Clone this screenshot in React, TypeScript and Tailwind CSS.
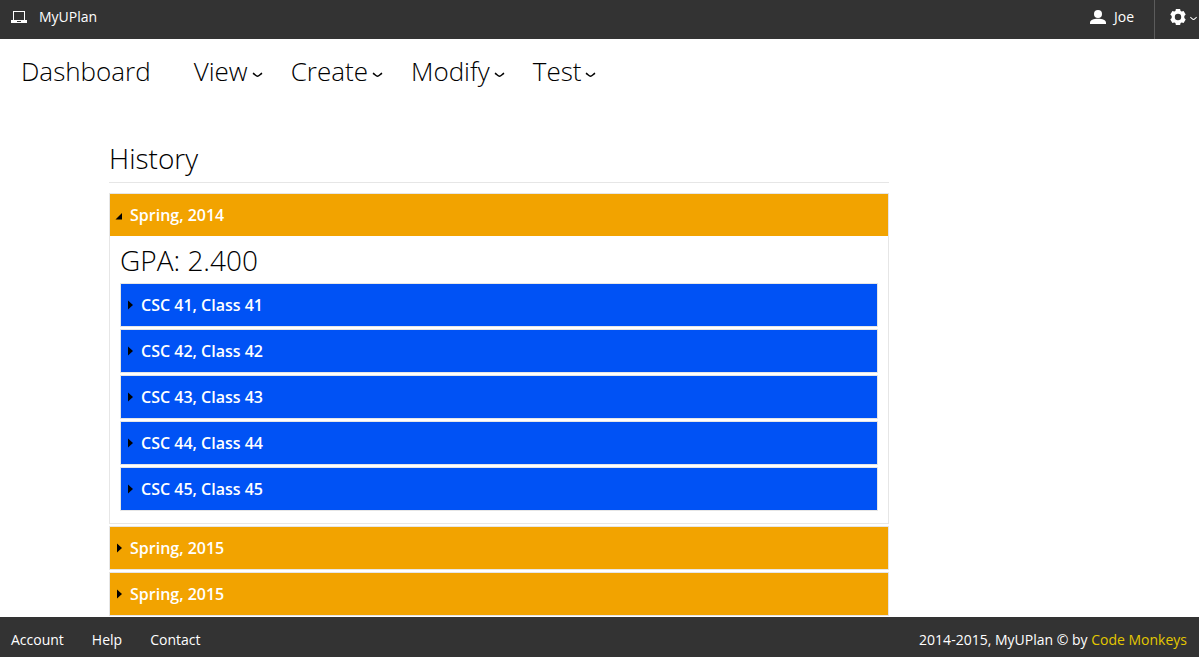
import { useState, type ReactNode } from "react";

function LaptopIcon() {
  return (
    <svg width="16" height="12" viewBox="0 0 16 12" aria-hidden="true" shapeRendering="crispEdges">
      <path d="M2 0h12v9H2zM3 1v8h10V1z" fill="#fff" fillRule="evenodd" />
      <path d="M0 9h16v3H0zM6 10v1h4v-1z" fill="#fff" fillRule="evenodd" />
    </svg>
  );
}

function UserIcon() {
  return (
    <svg width="16" height="14" viewBox="0 0 16 14" fill="#fff" aria-hidden="true">
      <ellipse cx="8" cy="4" rx="4" ry="4" />
      <path d="M0 14v-1.500C0 10 3.500 8.700 8 8.700s8 1.300 8 3.800V14z" />
    </svg>
  );
}

function GearIcon() {
  return (
    <svg width="16" height="16" viewBox="0 0 16 16" fill="#fff" aria-hidden="true">
      <path
        fillRule="evenodd"
        d="M5.900 0h4.200l.5 1.900 1.100.65 1.900-.55 2.100 3.600L14.300 7v2l1.400 1.400-2.100 3.600-1.900-.55-1.100.65-.5 1.900H5.900l-.5-1.900-1.100-.65L2.400 14 .3 10.400 1.700 9V7L.3 5.600 2.400 2l1.900.55 1.100-.65zM8 4.800a3.200 3.200 0 1 0 0 6.400 3.200 3.200 0 0 0 0-6.400z"
      />
    </svg>
  );
}

function Caret({ className }: { className: string }) {
  return (
    <svg className={className} viewBox="0 0 10 6" fill="none" stroke="currentColor" strokeWidth="1.500" aria-hidden="true">
      <path d="M.4 1.200C2 1.800 3.500 4.300 5 4.300S8 1.800 9.600 1.200" />
    </svg>
  );
}

function Marker({ open }: { open: boolean }) {
  return (
    <svg width="8" height="10" viewBox="0 0 8 10" fill="#000" aria-hidden="true">
      {open ? <path d="M7 3v6.500H.5z" /> : <path d="M2 .5 7 5 2 9.500z" />}
    </svg>
  );
}

type FrameProps = { title: string; color: string; initiallyOpen?: boolean; children?: ReactNode };

function Frame({ title, color, initiallyOpen = false, children }: FrameProps) {
  const [open, setOpen] = useState(initiallyOpen);
  return (
    <div className="border border-[#e6e6e6]">
      <button
        type="button"
        aria-expanded={open}
        onClick={() => setOpen(!open)}
        className={`flex h-[42px] w-full items-center gap-[7px] pl-[5px] text-left text-base font-semibold text-white ${color}`}
      >
        <Marker open={open} />
        <span>{title}</span>
      </button>
      {open && children}
    </div>
  );
}

const menus = ["View", "Create", "Modify", "Test"];
const classes = [41, 42, 43, 44, 45];

export default function App() {
  return (
    <div className="flex min-h-screen flex-col bg-white font-['Open_Sans',sans-serif] text-black">
      <header className="flex h-[39px] items-stretch justify-between bg-[#333] text-sm text-white">
        <a href="#" className="flex items-center gap-3 pb-[6px] pl-[11px]">
          <LaptopIcon />
          MyUPlan
        </a>
        <div className="flex">
          <a href="#" className="flex items-center gap-2 pr-5 pb-[6px]">
            <UserIcon />
            Joe
          </a>
          <button type="button" aria-label="Settings" className="flex items-center gap-1 border-l border-[#5c5c5c] pr-[2px] pb-[6px] pl-[15px]">
            <GearIcon />
            <Caret className="mt-1 h-[5px] w-[7px]" />
          </button>
        </div>
      </header>

      <nav className="flex h-16 items-center pl-[21px] text-[26px] font-light">
        <a href="#" className="mr-[43px]">Dashboard</a>
        <div className="flex gap-7">
          {menus.map((m) => (
            <button key={m} type="button" className="flex items-center gap-1">
              {m}
              <Caret className="mt-2 h-[6px] w-[11px]" />
            </button>
          ))}
        </div>
      </nav>

      <main className="mx-[109px] max-w-[780px] flex-1 pt-[35px]">
        <h1 className="border-b border-[#e6e6e6] pb-1 text-[28px] leading-10 font-light">History</h1>
        <div className="mt-[10px] flex flex-col gap-[2px]">
          <Frame title="Spring, 2014" color="bg-[#f2a300]" initiallyOpen>
            <div className="px-[10px] pt-1 pb-3">
              <h2 className="pb-[3px] text-[28px] leading-10 font-light">GPA: 2.400</h2>
              <div className="flex flex-col gap-[2px]">
                {classes.map((n) => (
                  <Frame key={n} title={`CSC ${n}, Class ${n}`} color="bg-[#0052f5]" />
                ))}
              </div>
            </div>
          </Frame>
          <Frame title="Spring, 2015" color="bg-[#f2a300]" />
          <Frame title="Spring, 2015" color="bg-[#f2a300]" />
        </div>
      </main>

      <footer className="flex h-10 items-center justify-between bg-[#333] px-3 pt-[5px] text-sm text-white">
        <div className="-ml-px flex gap-7">
          <a href="#">Account</a>
          <a href="#">Help</a>
          <a href="#">Contact</a>
        </div>
        <p>
          2014-2015, MyUPlan © by <a href="#" className="text-[#e3c800]">Code Monkeys</a>
        </p>
      </footer>
    </div>
  );
}
